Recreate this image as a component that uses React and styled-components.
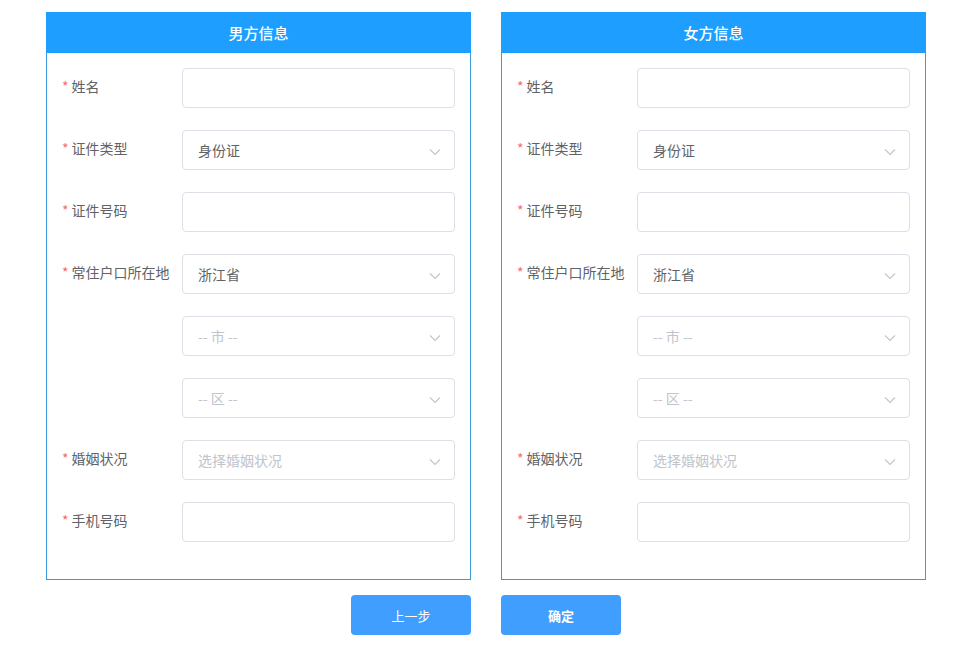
import styled, { createGlobalStyle } from "styled-components";

const GlobalStyle = createGlobalStyle`
  body {
    margin: 0;
    background: #fff;
    font-family: "Noto Sans CJK SC", "Noto Sans", sans-serif;
  }
`;

const Page = styled.div`
  padding: 12px 0 0 46px;
  width: 880px;
`;

const Panels = styled.div`
  display: flex;
  gap: 30px;
`;

const Panel = styled.div`
  width: 425px;
  flex-shrink: 0;
  box-sizing: border-box;
  border: 1px solid #3d9ad8;
  border-top: none;
`;

const PanelHeader = styled.div`
  height: 40px;
  padding-bottom: 1px;
  margin: 0 -1px;
  background: #1e9fff;
  color: #fff;
  font-size: 15px;
  font-weight: 500;
  display: flex;
  align-items: center;
  justify-content: center;
`;

const PanelBody = styled.div`
  padding: 15px;
`;

const Row = styled.div`
  display: flex;
  margin-bottom: 22px;
`;

const Label = styled.div`
  width: 120px;
  flex-shrink: 0;
  font-size: 14px;
  line-height: 36px;
  color: #606266;
  white-space: nowrap;
`;

const Star = styled.span`
  color: #f56c6c;
  margin-right: 3px;
`;

const Field = styled.div`
  flex: 1;
  min-width: 0;
  height: 40px;
  box-sizing: border-box;
  border: 1px solid #dcdfe6;
  border-radius: 4px;
  padding: 0 15px;
  display: flex;
  align-items: center;
  justify-content: space-between;
  font-size: 14px;
  color: ${(p) => (p.$placeholder ? "#c0c4cc" : "#606266")};
`;

const Chevron = styled.svg`
  width: 14px;
  height: 14px;
  margin-right: -3px;
  margin-top: 4px;
`;

const Actions = styled.div`
  display: flex;
  justify-content: center;
  gap: 30px;
  margin-top: 15px;
`;

const Button = styled.button`
  width: 120px;
  height: 40px;
  border: none;
  border-radius: 4px;
  background: #409eff;
  color: #fff;
  font-family: inherit;
  font-size: 13px;
  font-weight: ${(p) => (p.$bold ? 700 : 400)};
`;

const Arrow = () => (
  <Chevron viewBox="0 0 14 14">
    <path d="M2 4.5 L7 9.5 L12 4.5" fill="none" stroke="#c0c4cc" strokeWidth="1.1" />
  </Chevron>
);

const rows = [
  { label: "姓名" },
  { label: "证件类型", value: "身份证", select: true },
  { label: "证件号码" },
  { label: "常住户口所在地", value: "浙江省", select: true },
  { label: "", value: "-- 市 --", select: true, ph: true },
  { label: "", value: "-- 区 --", select: true, ph: true },
  { label: "婚姻状况", value: "选择婚姻状况", select: true, ph: true },
  { label: "手机号码" },
];

const InfoPanel = ({ title }) => (
  <Panel>
    <PanelHeader>{title}</PanelHeader>
    <PanelBody>
      {rows.map((r, i) => (
        <Row key={i}>
          <Label>
            {r.label && (
              <>
                <Star>*</Star>
                {r.label}
              </>
            )}
          </Label>
          <Field $placeholder={r.ph}>
            <span>{r.value}</span>
            {r.select && <Arrow />}
          </Field>
        </Row>
      ))}
    </PanelBody>
  </Panel>
);

export default function App() {
  return (
    <Page>
      <GlobalStyle />
      <Panels>
        <InfoPanel title="男方信息" />
        <InfoPanel title="女方信息" />
      </Panels>
      <Actions>
        <Button>上一步</Button>
        <Button $bold>确定</Button>
      </Actions>
    </Page>
  );
}
